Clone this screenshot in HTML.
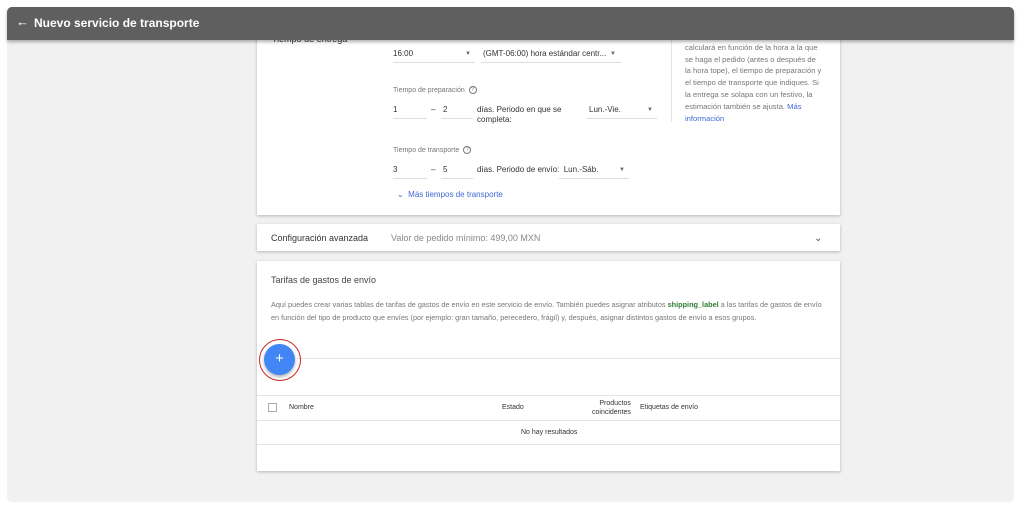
<!DOCTYPE html>
<html><head><meta charset="utf-8"><style>
*{box-sizing:border-box;margin:0;padding:0}
body{width:1024px;height:514px;background:#fff;font-family:"Liberation Sans",sans-serif;position:relative;overflow:hidden;color:#333}
.bg{position:absolute;left:7px;top:7px;width:1007px;height:495px;background:#f1f1f1;border-radius:5px}
.hdr{position:absolute;left:7px;top:7px;width:1007px;height:33px;background:#5f5f5f;border-radius:5px 5px 0 0;box-shadow:0 2px 3px rgba(0,0,0,.3);color:#fff;font-size:12px;font-weight:bold;z-index:5}
.hdr .t{position:absolute;left:27px;top:9px}
.hdr .a{position:absolute;left:9px;top:7px;font-size:13px;font-weight:normal}
.card{position:absolute;left:257px;width:583px;background:#fff;box-shadow:0 1px 3px rgba(0,0,0,.25)}
.a{position:absolute;white-space:nowrap}
.s{font-size:8px;color:#777}
.v{font-size:8px;color:#333}
.ul{position:absolute;height:1px;background:#ddd}
.dd{position:absolute;font-size:6px;color:#666}
.q{display:inline-block;width:8px;height:8px;border:1px solid #777;border-radius:50%;font-size:6px;text-align:center;line-height:6px;vertical-align:middle;margin-left:2px}
.link{color:#3f6ad8}
</style></head><body>
<div class="bg"></div>
<div class="hdr"><span class="a">&#8592;</span><span class="t">Nuevo servicio de transporte</span></div>

<div class="card" style="top:20px;height:195px">
  <div class="a s" style="left:15px;top:14px;color:#333;font-size:9px">Tiempo de entrega</div>
  <div class="a v" style="left:136px;top:29px">16:00</div><div class="dd" style="left:208px;top:31px">&#9660;</div><div class="ul" style="left:136px;top:42px;width:82px"></div>
  <div class="a v" style="left:226px;top:29px">(GMT-06:00) hora estándar centr...</div><div class="dd" style="left:353px;top:31px">&#9660;</div><div class="ul" style="left:224px;top:42px;width:140px"></div>
  <div class="a s" style="left:136px;top:66px;font-size:7px">Tiempo de preparación <span class="q">?</span></div>
  <div class="a v" style="left:136px;top:85px">1</div><div class="ul" style="left:136px;top:98px;width:34px"></div>
  <div class="a v" style="left:174px;top:85px">–</div>
  <div class="a v" style="left:186px;top:85px">2</div><div class="ul" style="left:184px;top:98px;width:32px"></div>
  <div class="a v" style="left:220px;top:85px;line-height:10px">días. Periodo en que se<br>completa:</div>
  <div class="a v" style="left:332px;top:85px">Lun.-Vie.</div><div class="dd" style="left:390px;top:87px">&#9660;</div><div class="ul" style="left:330px;top:98px;width:70px"></div>
  <div class="a s" style="left:136px;top:126px;font-size:7px">Tiempo de transporte <span class="q">?</span></div>
  <div class="a v" style="left:136px;top:145px">3</div><div class="ul" style="left:136px;top:158px;width:34px"></div>
  <div class="a v" style="left:174px;top:145px">–</div>
  <div class="a v" style="left:186px;top:145px">5</div><div class="ul" style="left:184px;top:158px;width:32px"></div>
  <div class="a v" style="left:220px;top:145px">días. Periodo de envío:&nbsp; Lun.-Sáb.</div><div class="dd" style="left:362px;top:147px">&#9660;</div><div class="ul" style="left:302px;top:158px;width:70px"></div>
  <div class="a link" style="left:140px;top:170px;font-size:8px">&#8964;&nbsp; Más tiempos de transporte</div>
  <div style="position:absolute;left:414px;top:20px;width:1px;height:82px;background:#e5e5e5"></div>
  <div class="a s" style="left:428px;top:10px;line-height:11.8px;font-size:7.6px">El tiempo de entrega estimado se<br>calculará en función de la hora a la que<br>se haga el pedido (antes o después de<br>la hora tope), el tiempo de preparación y<br>el tiempo de transporte que indiques. Si<br>la entrega se solapa con un festivo, la<br>estimación también se ajusta. <span class="link">Más</span><br><span class="link">información</span></div>
</div>

<div class="card" style="top:224px;height:27px">
  <div class="a" style="left:14px;top:9px;font-size:9px;color:#333">Configuración avanzada</div>
  <div class="a" style="left:134px;top:9px;font-size:9px;color:#888">Valor de pedido mínimo: 499,00 MXN</div>
  <div class="a" style="left:557px;top:9px;font-size:10px;color:#555">&#8964;</div>
</div>

<div class="card" style="top:261px;height:210px">
  <div class="a" style="left:14px;top:14px;font-size:9px;color:#444">Tarifas de gastos de envío</div>
  <div class="a s" style="left:14px;top:37px;line-height:13px;font-size:7.3px">Aquí puedes crear varias tablas de tarifas de gastos de envío en este servicio de envío. También puedes asignar atributos <b style="color:#2e7d32">shipping_label</b> a las tarifas de gastos de envío<br>en función del tipo de producto que envíes (por ejemplo: gran tamaño, perecedero, frágil) y, después, asignar distintos gastos de envío a esos grupos.</div>
  <div style="position:absolute;left:40px;top:97px;width:543px;height:1px;background:#e5e5e5"></div>
  <div style="position:absolute;left:2px;top:78px;width:42px;height:42px;border:1.5px solid #c62828;border-radius:50%"></div>
  <div style="position:absolute;left:7px;top:83px;width:31px;height:31px;background:#4285f4;border-radius:50%;box-shadow:0 2px 3px rgba(0,0,0,.3);color:#fff;text-align:center;line-height:30px;font-size:15px">+</div>
  <div style="position:absolute;left:0;top:134px;width:583px;height:1px;background:#e5e5e5"></div>
  <div style="position:absolute;left:11px;top:142px;width:9px;height:9px;border:1px solid #aaa"></div>
  <div class="a v" style="left:32px;top:143px;font-size:7px">Nombre</div>
  <div class="a v" style="left:245px;top:143px;font-size:7px">Estado</div>
  <div class="a v" style="left:335px;top:138px;font-size:7px;text-align:right;line-height:9px">Productos<br>coincidentes</div>
  <div class="a v" style="left:383px;top:143px;font-size:7px">Etiquetas de envío</div>
  <div style="position:absolute;left:0;top:159px;width:583px;height:1px;background:#e5e5e5"></div>
  <div class="a v" style="left:264px;top:168px;font-size:7px">No hay resultados</div>
  <div style="position:absolute;left:0;top:183px;width:583px;height:1px;background:#e5e5e5"></div>
</div>
</body></html>
